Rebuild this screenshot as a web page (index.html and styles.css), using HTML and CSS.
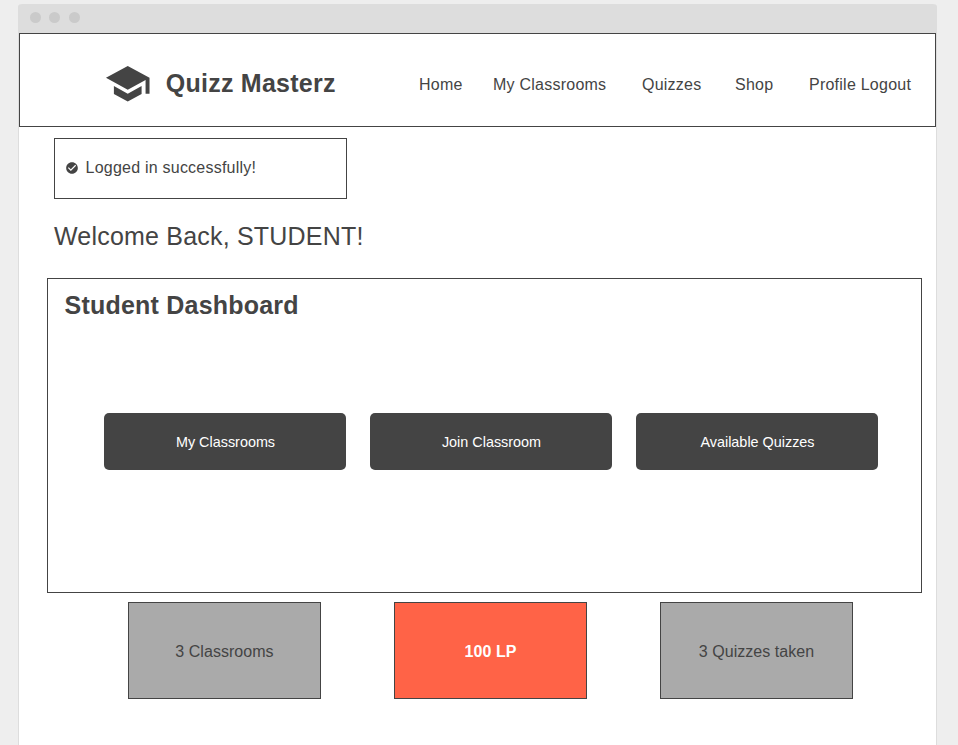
FILE: index.html
```html
<!DOCTYPE html>
<html lang="en">
<head>
<meta charset="utf-8">
<title>Quizz Masterz</title>
<link rel="stylesheet" href="styles.css">
</head>
<body>
<div class="window">
  <div class="titlebar"><span class="dot"></span><span class="dot"></span><span class="dot"></span></div>
  <header class="header">
    <div class="brand">
      <svg class="logo" viewBox="0 0 24 24"><path d="M5 13.18v4L12 21l7-3.82v-4L12 17l-7-3.82zM12 3L1 9l11 6 9-4.91V17h2V9L12 3z"/></svg>
      <span class="name">Quizz Masterz</span>
    </div>
    <nav class="nav"><a>Home</a><a>My Classrooms</a><a>Quizzes</a><a>Shop</a><a>Profile Logout</a></nav>
  </header>
  <main class="main">
    <div class="alert">
      <svg class="check" viewBox="0 0 24 24"><path d="M12 2C6.48 2 2 6.48 2 12s4.48 10 10 10 10-4.48 10-10S17.52 2 12 2zm-2 15l-5-5 1.41-1.41L10 14.17l7.59-7.59L19 8l-9 9z"/></svg>
      <span>Logged in successfully!</span>
    </div>
    <h1 class="welcome">Welcome Back, STUDENT!</h1>
    <section class="dashboard">
      <h2 class="heading">Student Dashboard</h2>
      <div class="actions">
        <button class="action">My Classrooms</button>
        <button class="action">Join Classroom</button>
        <button class="action">Available Quizzes</button>
      </div>
    </section>
    <div class="stats">
      <div class="stat">3 Classrooms</div>
      <div class="stat points">100 LP</div>
      <div class="stat">3 Quizzes taken</div>
    </div>
  </main>
</div>
</body>
</html>
```
FILE: styles.css
```css
* { box-sizing: border-box; }
body {
  margin: 0;
  height: 745px;
  padding: 4px 21px 0 18px;
  overflow: hidden;
  background: #eee;
  color: #444;
  font: 16px/20px "Liberation Sans", Arial, sans-serif;
}
.window {
  height: 741px;
  background: #fff;
  border: solid #ddd;
  border-width: 0 1px;
  border-radius: 4px 4px 0 0;
}
.titlebar {
  height: 29px;
  margin: 0 -1px;
  padding: 8px 11.5px;
  display: flex;
  gap: 8.7px;
  background: #ddd;
  border-radius: 4px 4px 0 0;
}
.dot { width: 11px; height: 11px; border-radius: 50%; background: #cacaca; }
.header {
  height: 94px;
  border: 1px solid #444;
  display: flex;
  justify-content: space-between;
  letter-spacing: .24px;
}
.brand { display: flex; padding: 26px 0 0 84px; }
.logo { width: 47.5px; height: 47.5px; fill: #444; }
.name { margin: 8px 0 0 14.3px; font-size: 25px; line-height: 30px; font-weight: bold; }
.nav {
  display: grid;
  grid-template-columns: 74px 149px 93px 74px auto;
  width: 516px;
  padding-top: 41px;
  white-space: nowrap;
}
.main { padding: 11px 14px 0 28px; }
.alert {
  width: 293px;
  height: 61px;
  margin-left: 7px;
  padding: 0 10px 2px;
  border: 1px solid #444;
  display: flex;
  align-items: center;
  gap: 7px;
  letter-spacing: .22px;
}
.check { width: 14px; height: 14px; margin-left: -.4px; fill: #444; }
.welcome {
  margin: 22px 0 27px 7px;
  font-size: 25px;
  line-height: 30px;
  font-weight: normal;
  letter-spacing: .2px;
}
.dashboard { height: 315px; border: 1px solid #444; padding: 11px 43px 0 16.5px; }
.heading { margin: 0; font-size: 25px; line-height: 30px; letter-spacing: .22px; }
.actions { display: flex; gap: 24px; margin: 93px 0 0 39.5px; }
.action {
  flex: 0 0 242px;
  height: 57px;
  padding: 0 0 0 1px;
  border: 0;
  border-radius: 5px;
  background: #444;
  color: #fff;
  font: 14.4px "Liberation Sans", Arial, sans-serif;
}
.stats { display: flex; gap: 73px; margin: 9px 0 0 81px; letter-spacing: .04px; }
.stat {
  flex: 0 0 193px;
  height: 97px;
  padding-top: 2px;
  border: 1px solid #444;
  background: #aaa;
  display: flex;
  align-items: center;
  justify-content: center;
}
.points { background: tomato; color: #fff; font-weight: bold; }
```
